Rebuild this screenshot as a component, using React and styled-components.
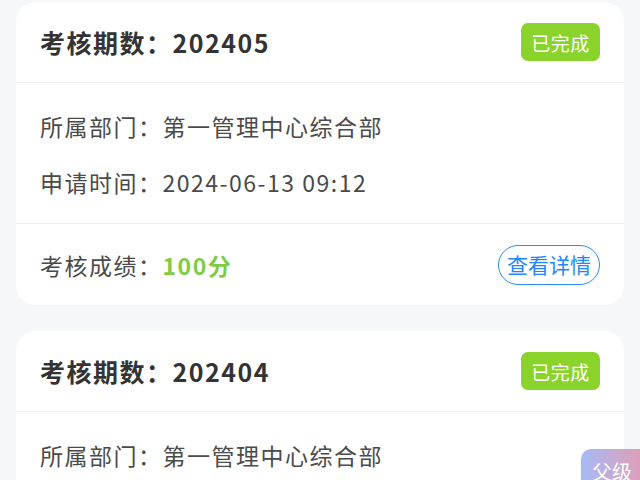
import React from 'react'
import styled, { createGlobalStyle } from 'styled-components'

const GlobalStyle = createGlobalStyle`
  html, body {
    margin: 0;
    padding: 0;
    background: #f6f7f9;
    font-family: "Noto Sans CJK SC", "Noto Sans", sans-serif;
  }
`

const records = [
  { id: 1, period: '202405', dept: '第一管理中心综合部', time: '2024-06-13 09:12', score: '100分' },
  { id: 2, period: '202404', dept: '第一管理中心综合部', time: '2024-05-13 09:12', score: '100分' },
]

const List = styled.div`
  display: flex;
  flex-direction: column;
  gap: 26px;
  padding: 2px 16px 20px;
`

const Card = styled.article`
  background: #fff;
  border-radius: 20px;
  overflow: hidden;
`

const Header = styled.div`
  height: 80px;
  padding: 0 24px;
  display: flex;
  align-items: center;
  justify-content: space-between;
  border-bottom: 1px solid #f0f0f0;
`

const Title = styled.h4`
  margin: 0;
  font-size: 25px;
  letter-spacing: 1.5px;
  font-weight: 700;
  color: #333;
`

const Badge = styled.span`
  display: inline-flex;
  align-items: center;
  justify-content: center;
  width: 79px;
  height: 38px;
  border-radius: 7px;
  background: #8ad32a;
  color: #fff;
  font-size: 19px;
  letter-spacing: 0.5px;
`

const Body = styled.div`
  padding: 15px 24px 13px;
  border-bottom: 1px solid #f0f0f0;
`

const Row = styled.p`
  margin: 0;
  height: 56px;
  display: flex;
  align-items: center;
  font-size: 23px;
  letter-spacing: 1.5px;
  color: #4a4a4a;
`

const Footer = styled.div`
  height: 81px;
  padding: 0 24px;
  display: flex;
  align-items: center;
  justify-content: space-between;
`

const Score = styled.span`
  color: #7fcb45;
  font-weight: 700;
`

const DetailButton = styled.button`
  height: 40px;
  padding: 0 8px;
  border: 1.5px solid #2a8cff;
  border-radius: 20px;
  background: #fff;
  color: #1f86ff;
  font-family: inherit;
  font-size: 21px;
  line-height: 1;
  cursor: pointer;
`

const FloatTab = styled.div`
  position: fixed;
  left: 581px;
  top: 449px;
  width: 70px;
  height: 50px;
  padding: 8px 0 0 11px;
  box-sizing: border-box;
  border-radius: 10px 0 0 0;
  background: linear-gradient(90deg, #a7baf6, #e69aac);
  color: #fff;
  font-size: 20px;
`

const App = () => {
  return (
    <>
      <GlobalStyle />
      <List>
        {records.map((item) => (
          <Card key={item.id}>
            <Header>
              <Title>考核期数：{item.period}</Title>
              <Badge>已完成</Badge>
            </Header>
            <Body>
              <Row>所属部门：{item.dept}</Row>
              <Row>申请时间：{item.time}</Row>
            </Body>
            <Footer>
              <Row>
                考核成绩：<Score>{item.score}</Score>
              </Row>
              <DetailButton>查看详情</DetailButton>
            </Footer>
          </Card>
        ))}
      </List>
      <FloatTab>父级</FloatTab>
    </>
  )
}

export default App
